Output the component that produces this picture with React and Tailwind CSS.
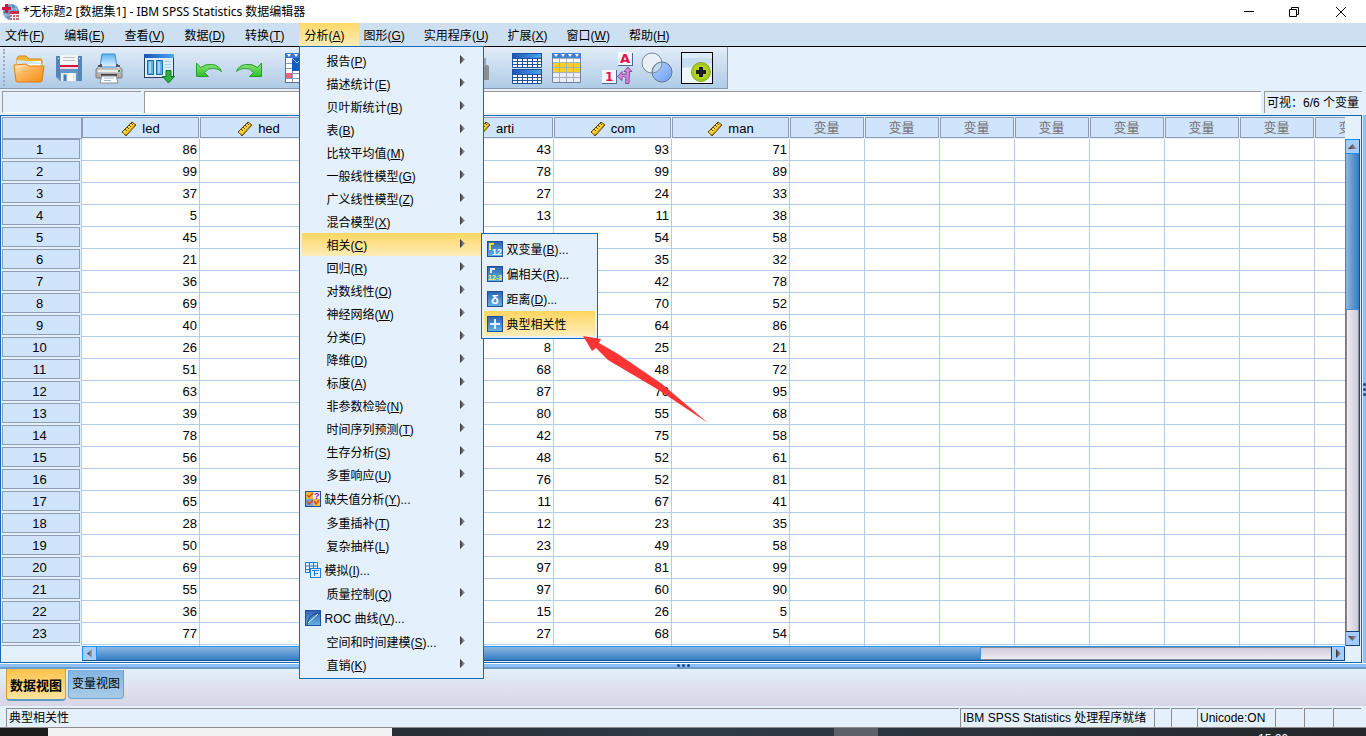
import React from 'react';

const menus = [
  ['文件', 'F'],
  ['编辑', 'E'],
  ['查看', 'V'],
  ['数据', 'D'],
  ['转换', 'T'],
  ['分析', 'A'],
  ['图形', 'G'],
  ['实用程序', 'U'],
  ['扩展', 'X'],
  ['窗口', 'W'],
  ['帮助', 'H'],
];

const analyzeItems = [
  { label: '报告', k: 'P' },
  { label: '描述统计', k: 'E' },
  { label: '贝叶斯统计', k: 'B' },
  { label: '表', k: 'B' },
  { label: '比较平均值', k: 'M' },
  { label: '一般线性模型', k: 'G' },
  { label: '广义线性模型', k: 'Z' },
  { label: '混合模型', k: 'X' },
  { label: '相关', k: 'C', active: true },
  { label: '回归', k: 'R' },
  { label: '对数线性', k: 'O' },
  { label: '神经网络', k: 'W' },
  { label: '分类', k: 'F' },
  { label: '降维', k: 'D' },
  { label: '标度', k: 'A' },
  { label: '非参数检验', k: 'N' },
  { label: '时间序列预测', k: 'T' },
  { label: '生存分析', k: 'S' },
  { label: '多重响应', k: 'U' },
  { label: '缺失值分析', k: 'Y', icon: 'missing', dots: true },
  { label: '多重插补', k: 'T' },
  { label: '复杂抽样', k: 'L' },
  { label: '模拟', k: 'I', icon: 'simulate', dots: true },
  { label: '质量控制', k: 'Q' },
  { label: 'ROC 曲线', k: 'V', icon: 'roc', dots: true },
  { label: '空间和时间建模', k: 'S', dots: true },
  { label: '直销', k: 'K' },
];

const correlateItems = [
  { label: '双变量', k: 'B', icon: 'bivariate', dots: true },
  { label: '偏相关', k: 'R', icon: 'partial', dots: true },
  { label: '距离', k: 'D', icon: 'distance', dots: true },
  { label: '典型相关性', icon: 'plus', active: true },
];

const columns = ['led', 'hed', '', 'arti', 'com', 'man'];

const rows = [
  [86, '', '', 43, 93, 71],
  [99, '', '', 78, 99, 89],
  [37, '', '', 27, 24, 33],
  [5, '', '', 13, 11, 38],
  [45, '', '', 39, 54, 58],
  [21, '', '', '', 35, 32],
  [36, '', '', '', 42, 78],
  [69, '', '', '', 70, 52],
  [40, '', '', '', 64, 86],
  [26, '', '', 8, 25, 21],
  [51, '', '', 68, 48, 72],
  [63, '', '', 87, 76, 95],
  [39, '', '', 80, 55, 68],
  [78, '', '', 42, 75, 58],
  [56, '', '', 48, 52, 61],
  [39, '', '', 76, 52, 81],
  [65, '', '', 11, 67, 41],
  [28, '', '', 12, 23, 35],
  [50, '', '', 23, 49, 58],
  [69, '', '', 97, 81, 99],
  [55, '', '', 97, 60, 90],
  [36, '', '', 15, 26, 5],
  [77, '', '', 27, 68, 54],
  ['', '', '', '', '', ''],
];

const emptyColumns = [0, 1, 2, 3, 4, 5, 6, 7];

/* ---------- icons ---------- */

const Defs = () => (
  <svg width="0" height="0" className="absolute" aria-hidden="true">
    <defs>
      <linearGradient id="gOrange" x1="0" y1="0" x2="1" y2="1">
        <stop offset="0" stopColor="#fff0d8" />
        <stop offset="0.4" stopColor="#fdb65c" />
        <stop offset="1" stopColor="#f58a10" />
      </linearGradient>
      <linearGradient id="gBlue" x1="0" y1="0" x2="1" y2="0">
        <stop offset="0" stopColor="#1c54b4" />
        <stop offset="1" stopColor="#4aa8f0" />
      </linearGradient>
      <linearGradient id="gTile" x1="0" y1="0" x2="0" y2="1">
        <stop offset="0" stopColor="#2f62b4" />
        <stop offset="1" stopColor="#62b4e4" />
      </linearGradient>
      <linearGradient id="gGreen" x1="0" y1="0" x2="0" y2="1">
        <stop offset="0" stopColor="#8fe480" />
        <stop offset="1" stopColor="#2cc028" />
      </linearGradient>
      <linearGradient id="gPaper" x1="0" y1="0" x2="0" y2="1">
        <stop offset="0" stopColor="#5cb0f4" />
        <stop offset="1" stopColor="#e4f4ff" />
      </linearGradient>
      <linearGradient id="gGray" x1="0" y1="0" x2="0" y2="1">
        <stop offset="0" stopColor="#f4f4f4" />
        <stop offset="1" stopColor="#a0a0a0" />
      </linearGradient>
      <linearGradient id="gCircle" x1="0" y1="0" x2="1" y2="1">
        <stop offset="0" stopColor="#b4d4ff" />
        <stop offset="1" stopColor="#6c9cf0" />
      </linearGradient>
      <linearGradient id="gArrow" x1="0" y1="0" x2="1" y2="0">
        <stop offset="0" stopColor="#333333" />
        <stop offset="1" stopColor="#a8a8a8" />
      </linearGradient>
    </defs>
  </svg>
);

const AppIcon = () => (
  <svg width="18" height="18" viewBox="0 0 18 18">
    <circle cx="9" cy="9" r="8" fill="#5c94c0" />
    <path d="M9 1v16M2 6h14M2 12h14M5 2c-2 4-2 10 0 14M13 2c2 4 2 10 0 14" fill="none" stroke="#a8c8e0" />
    <path d="M3 1h3v3h3v3H6v3H3V7H0V4h3z" fill="#d8103c" />
    <rect x="8" y="8" width="9" height="10" fill="#fff" />
    <rect x="8" y="8" width="9" height="3" fill="#c8304c" />
    <path d="M8 12h2v2H8zM11 12h2v2h-2zM14 12h3v2h-3zM8 15h2v2H8zM11 15h2v2h-2zM14 15h3v2h-3z" fill="#c86878" />
  </svg>
);

const OpenIcon = () => (
  <svg width="32" height="32" viewBox="0 0 32 32">
    <path d="M4 12V6l2-2h7l3 3h12l1 2v8H4z" fill="#f5b638" stroke="#d08a14" />
    <path d="M5 9h23v8H5z" fill="#fff" />
    <path d="M4 8l22 2 3 2v5H4z" fill="#cfe4f8" />
    <path d="M3 12h24v3H3z" fill="#fff" />
    <path d="M3 29L1 13l12-1 3 2h15l-2 15q-1 1-2 1H5q-2 0-2-1z" fill="url(#gOrange)" stroke="#e07c10" />
  </svg>
);

const SaveIcon = () => (
  <svg width="32" height="32" viewBox="0 0 32 32">
    <path d="M3 4h26v25H7l-4-4z" fill="#6494c8" />
    <path d="M3 4h4v22l-4-1zM25 4h4v25h-4z" fill="#5484b8" />
    <path d="M5 6h1v1H5zM26 6h1v1h-1z" fill="#dce8f4" />
    <path d="M7 3h18v11H7z" fill="#f2f5f8" />
    <path d="M7 13h18v2H7z" fill="#d4143c" />
    <path d="M7 15h18v2H7z" fill="#f8d8e0" />
    <path d="M10 5.5h12M10 8.5h12" stroke="#b8c0c8" />
    <path d="M8 21h15v8H8z" fill="#e6eaee" />
    <path d="M10.5 22.500h3v6.500h-3z" fill="#4878b0" />
    <path d="M15 21h5v8h-5z" fill="#fff" />
  </svg>
);

const PrintIcon = () => (
  <svg width="32" height="32" viewBox="0 0 32 32">
    <path d="M3 17l5-4h16l5 4v8q0 1-1 1H4q-1 0-1-1z" fill="url(#gGray)" stroke="#7c7c7c" />
    <path d="M7 15L9 2h13l2 13z" fill="url(#gPaper)" stroke="#3c8cd4" />
    <path d="M5 14h3v-2M24 12v2h3" fill="none" stroke="#555" strokeWidth="2" />
    <path d="M4 17h24v4H4z" fill="#ececec" stroke="#9c9c9c" />
    <path d="M8 22h16v2H8z" fill="#444" />
    <path d="M9 24h14l2 7H7z" fill="#fff" stroke="#8f8f8f" />
    <path d="M11 26h10M11 28.500h7" stroke="#9ab8d4" />
    <path d="M25 19h2" stroke="#28a028" strokeWidth="2" />
  </svg>
);

const RecallIcon = () => (
  <svg width="32" height="32" viewBox="0 0 32 32">
    <rect x="1.5" y="2.5" width="29" height="23" fill="#dcecfa" stroke="#2c3c5c" />
    <rect x="1" y="2" width="30" height="4" fill="url(#gBlue)" />
    <path d="M4.500 8.500h6v14h-6zM13.500 8.500h6v14h-6z" fill="#62b0e0" stroke="#186cac" />
    <path d="M6 10h2v11H6zM15 10h2v11h-2z" fill="#a4d8f4" />
    <path d="M22 9.500h6M22 12.500h6M22 15.500h6" stroke="#a8d0ec" />
    <path d="M23 18.500h5v6h3.500L25.500 31l-6-6.500H23z" fill="#2cb040" stroke="#107424" />
  </svg>
);

const UndoIcon = ({ flip }) => (
  <svg width="32" height="32" viewBox="0 0 32 32">
    <path
      transform={flip ? 'translate(32 0) scale(-1 1)' : undefined}
      d="M3.500 11v13.500h12l-4-4q4-5 9-4 5 0 8 3-2-6-9-7-7-1-12 3z"
      fill="url(#gGreen)"
      stroke="#2c9c30"
    />
  </svg>
);

const GotoIcon = () => (
  <svg width="32" height="32" viewBox="0 0 32 32">
    <rect x="0.5" y="1.5" width="30" height="29" fill="#fff" stroke="#60708c" />
    <rect x="0" y="1" width="31" height="5" fill="#3c78d0" />
    <path d="M2 2h4l-2 3zM9 2h4l-2 3z" fill="#fff" />
    <path d="M7.500 6v24M14.500 6v24M1 11.500h30M1 16.500h30M1 21.500h30M1 26.500h30" stroke="#8898b4" />
    <rect x="1" y="21" width="6" height="5" fill="#f06070" />
    <path d="M7 6h24v13H7z" fill="#145cc0" />
    <path d="M7 6l5 5 4-4" fill="none" stroke="#8cc4f4" />
  </svg>
);

const BinocularIcon = () => (
  <svg width="32" height="32" viewBox="0 0 32 32">
    <path d="M4 12h8V6h8v6h8l4 2v14H4z" fill="#8a8f94" />
    <path d="M26 6h3v8h-3z" fill="#a0a4a8" />
  </svg>
);

const SplitIcon = () => (
  <svg width="32" height="32" viewBox="0 0 32 32">
    {[1, 17].map((y) => (
      <g key={y} transform={`translate(0 ${y})`}>
        <rect x="1" y="0" width="30" height="15" fill="#fff" />
        <rect x="1" y="0" width="30" height="5" fill="url(#gBlue)" />
        <path
          d="M1.500 0v14.500h29V0M1 .5h30M1 5.500h30M1 8.500h30M1 11.500h30M6.500 5v10M11.500 5v10M16.500 5v10M21.500 5v10M26.500 5v10"
          fill="none"
          stroke="#1c50a4"
        />
      </g>
    ))}
  </svg>
);

const SelectCasesIcon = () => (
  <svg width="32" height="32" viewBox="0 0 32 32">
    <rect x="1" y="1" width="29" height="30" fill="#fff" />
    <rect x="1" y="1" width="29" height="5" fill="#4080d8" />
    <path d="M3 2h4l-2 3zM10 2h4l-2 3zM17 2h4l-2 3zM24 2h4l-2 3z" fill="#fff" />
    <rect x="1" y="11" width="29" height="10" fill="#f8d028" />
    <rect x="1" y="21" width="29" height="9" fill="#e8edf2" />
    <path d="M1 6.500h29M1 10.500h29M1 15.500h29M1 20.500h29M1 25.500h29M8.500 6v24M15.500 6v24M22.500 6v24" stroke="#a8b0bc" />
    <path d="M1.500 6v24.500h28V6" fill="none" stroke="#7080a0" />
  </svg>
);

const LabelsIcon = () => (
  <svg width="32" height="32" viewBox="0 0 32 32">
    <rect x="17" y="0" width="15" height="13" fill="#f4f8fc" />
    <path d="M17 13.500h15.500M31.500 1v13" fill="none" stroke="#4c6890" />
    <text x="19" y="11" fontSize="13" fontWeight="700" fill="#e8104c" fontFamily="DejaVu Sans">A</text>
    <rect x="1" y="18" width="14" height="13" fill="#f4f8fc" />
    <path d="M1 31.500h14.500V18" fill="none" stroke="#4c6890" />
    <text x="4" y="29" fontSize="12" fontWeight="700" fill="#e8104c" fontFamily="DejaVu Sans">1</text>
    <path d="M28 31.500h-3.500l.5-6q-3-2-4 0v3l-4.500-4 4.500-5v3q3-1 4 0v-3h-2l4-4.500 4 4.500h-2.500z" fill="#d088d8" stroke="#8c4c9c" />
  </svg>
);

const SetsIcon = () => (
  <svg width="32" height="32" viewBox="0 0 32 32">
    <circle cx="11" cy="11" r="10" fill="#e8f0f8" stroke="#7c8894" />
    <circle cx="21" cy="20" r="10" fill="url(#gCircle)" stroke="#64748c" />
    <path d="M11.500 21A10 10 0 0 1 21 10 10 10 0 0 1 11.500 21z" fill="#c4d8f0" stroke="#7c8894" />
  </svg>
);

const CustomIcon = () => (
  <svg width="32" height="32" viewBox="0 0 32 32">
    <rect x="0.5" y="0.5" width="31" height="31" fill="#dcebfa" stroke="#000" />
    <path d="M1 6h30v5L1 16z" fill="#c8dcf2" />
    <path d="M1 16h30v15H1z" fill="#eef6fe" />
    <circle cx="20" cy="20" r="9.500" fill="#b4d420" stroke="#80a818" />
    <circle cx="20" cy="20" r="8" fill="none" stroke="#98c018" />
    <path d="M20 15v10M15 20h10" stroke="#1c1c1c" strokeWidth="4" />
  </svg>
);

const RulerIcon = () => (
  <svg width="16" height="16" viewBox="0 0 16 16">
    <path d="M1 11L11 1l4 3L5 15z" fill="#fcd030" stroke="#54461c" />
    <path d="M4 8l2 2M6 6l2 2M8 4l2 2M10 2l2 2" stroke="#5c4808" />
    <path d="M2 12l3 2 9-10" fill="none" stroke="#b87c10" />
  </svg>
);

const ItemIcon = ({ name }) => {
  if (name === 'simulate') {
    return (
      <svg width="16" height="16" viewBox="0 0 16 16">
        <path d="M.5.5h12v10H.5zM.5 4h12M.5 7.500h12M4.500.5v10M8.500.5v10" fill="#e4f0fc" stroke="#1c7cdc" />
        <rect x="5.500" y="6.500" width="10" height="9" fill="#e4f0fc" stroke="#1c7cdc" />
        <path d="M7 8.500h7M9.500 8v6M9 11.500h4" fill="none" stroke="#1c7cdc" />
      </svg>
    );
  }
  return (
    <svg width="16" height="16" viewBox="0 0 16 16">
      <rect x="0.5" y="0.5" width="15" height="15" fill="url(#gTile)" stroke="#1f4f98" />
      {name === 'missing' && (
        <>
          <path d="M1 1h7v7H1z" fill="#f0b840" />
          <path d="M8 1h7v7H8z" fill="#f4e8f4" />
          <path d="M1 8h7v7H1z" fill="#6ca8dc" />
          <path d="M8 8h7v7H8z" fill="#e8c048" />
          <path d="M2 4l2 2 4-4M2 10l2 3 4-4M9 10l2 3 3-4" fill="none" stroke="#e04430" strokeWidth="1.500" />
          <text x="9" y="8" fontSize="9" fontWeight="700" fill="#8c209c" fontFamily="Liberation Sans">?</text>
        </>
      )}
      {name === 'roc' && (
        <>
          <path d="M2 15C3 7 8 3 15 3" fill="none" stroke="#1c3c78" />
          <path d="M3 13L13 4" stroke="#e4f4fc" />
        </>
      )}
      {name === 'bivariate' && (
        <>
          <path d="M3 9V2M3 4q1-2 4-1" fill="none" stroke="#fce820" strokeWidth="2" />
          <text x="5" y="14" fontSize="9" fontWeight="700" fill="#fff" fontFamily="Liberation Sans">12</text>
        </>
      )}
      {name === 'partial' && (
        <>
          <path d="M4 7V2M4 3h4" fill="none" stroke="#e8e8e8" strokeWidth="2" />
          <text x="1" y="14" fontSize="7" fontWeight="700" fill="#f0f060" fontFamily="Liberation Sans">12-3</text>
        </>
      )}
      {name === 'distance' && (
        <text x="4" y="13" fontSize="13" fontWeight="700" fill="#fff" fontFamily="Liberation Sans">δ</text>
      )}
      {name === 'plus' && <path d="M8 3v10M3 8h10" stroke="#e4f4fc" strokeWidth="2" />}
    </svg>
  );
};

const Triangle = ({ d }) => (
  <svg width="9" height="9" viewBox="0 0 9 9">
    <path d={d} fill="url(#gArrow)" />
  </svg>
);

const Label = ({ label, k, dots }) => (
  <span className="whitespace-nowrap">
    {label}
    {k && (
      <>
        (<span className="underline underline-offset-1">{k}</span>)
      </>
    )}
    {dots && '...'}
  </span>
);

/* ---------- menus ---------- */

const MenuItem = ({ item, submenu }) => {
  const height = item.icon ? 'h-[25px]' : 'h-[23px] pt-0.5';
  const indent = submenu || item.icon ? 'pl-[3px] gap-[3px]' : 'pl-6';
  const bg = item.active ? 'bg-linear-to-b from-[#ffd65c] to-[#fcecb8]' : '';
  return (
    <button className={`flex w-full items-center text-left ${height} ${indent} ${bg}`}>
      {item.icon && <ItemIcon name={item.icon} />}
      <span className={item.icon ? 'pt-0.5' : ''}>
        <Label {...item} />
      </span>
      {!item.icon && (
        <span className="ml-auto mr-4 pb-1">
          <Triangle d="M2 0L7 4.5 2 9z" />
        </span>
      )}
    </button>
  );
};

const AnalyzeMenu = () => (
  <div className="absolute left-0 top-full z-20 w-[185px] border border-[#1468b4] bg-[#e4f0fc] py-0.5 pl-0.5">
    {analyzeItems.map((item) => (
      <div key={item.label} className="relative">
        <MenuItem item={item} />
        {item.active && (
          <div className="absolute left-[179px] top-0 z-30 w-[117px] border border-[#1468b4] bg-[#e4f0fc] py-0.5 pl-0.5 pr-0.5">
            {correlateItems.map((sub) => (
              <MenuItem key={sub.label} item={sub} submenu />
            ))}
          </div>
        )}
      </div>
    ))}
  </div>
);

const MenuBar = () => (
  <nav className="flex h-6 border-b border-black bg-[#cde0f1]">
    {menus.map(([label, k], i) => (
      <div key={label} className="relative h-[23px]">
        <button
          className={`h-full pl-[5px] pt-0.5 ${i < 5 ? 'pr-[15px]' : 'pr-3.5'} ${
            k === 'A' ? 'bg-linear-to-b from-[#ffd965] to-[#fcebb5]' : ''
          }`}
        >
          <Label label={label} k={k} />
        </button>
        {k === 'A' && <AnalyzeMenu />}
      </div>
    ))}
  </nav>
);

const ToolButton = ({ name, children }) => (
  <button aria-label={name} className="flex w-10 items-center justify-center">
    {children}
  </button>
);

const Toolbar = () => (
  <div className="flex h-[42px] bg-[#e4f0fc]">
    <div className="flex border-b border-r border-[#8e98a6] bg-linear-to-b from-[#e2edf8] to-[#afcbe6] pl-[3px] pr-2.5">
      <div className="my-0.5 mr-1 w-0.5 border-l-2 border-dotted border-[#9cacbe]" />
      <ToolButton name="打开"><OpenIcon /></ToolButton>
      <ToolButton name="保存"><SaveIcon /></ToolButton>
      <ToolButton name="打印"><PrintIcon /></ToolButton>
      <div className="w-2.5" />
      <ToolButton name="重新调用"><RecallIcon /></ToolButton>
      <div className="w-2.5" />
      <ToolButton name="撤销"><UndoIcon /></ToolButton>
      <ToolButton name="重做"><UndoIcon flip /></ToolButton>
      <div className="w-3" />
      <ToolButton name="转到个案"><GotoIcon /></ToolButton>
      <ToolButton name="转到变量"><GotoIcon /></ToolButton>
      <ToolButton name="变量"><RecallIcon /></ToolButton>
      <div className="w-3" />
      <ToolButton name="描述"><SelectCasesIcon /></ToolButton>
      <ToolButton name="查找"><BinocularIcon /></ToolButton>
      <div className="w-3.5" />
      <ToolButton name="拆分文件"><SplitIcon /></ToolButton>
      <ToolButton name="选择个案"><SelectCasesIcon /></ToolButton>
      <div className="w-2.5" />
      <ToolButton name="值标签"><LabelsIcon /></ToolButton>
      <ToolButton name="使用变量集"><SetsIcon /></ToolButton>
      <ToolButton name="定制工具栏"><CustomIcon /></ToolButton>
    </div>
  </div>
);

/* ---------- data grid ---------- */

const DataTable = () => (
  <table className="w-[1389px] table-fixed border-separate border-spacing-0 text-[13px] leading-5">
    <colgroup>
      <col className="w-[81px]" />
      {columns.map((c, i) => <col key={i} className="w-[118px]" />)}
      {emptyColumns.map((c) => <col key={c} className="w-[75px]" />)}
    </colgroup>
    <thead>
      <tr className="h-[23px]">
        <th className="p-0 pt-px" aria-label="个案">
          <div className="ml-px h-[22px] border border-[#8e9cb8] bg-[#d0e4fc]" />
        </th>
        {columns.map((c, i) => (
          <th key={i} className="p-0 pr-px font-normal">
            <div className="flex h-[21px] items-center justify-center gap-[5px] border border-[#8e9cb8] bg-[#d0e4fc] pt-0.5">
              <RulerIcon />
              {c}
            </div>
          </th>
        ))}
        {emptyColumns.map((c) => (
          <th key={c} className="p-0 pr-px font-normal">
            <div className="flex h-[21px] items-center justify-center border border-[#8e9cb8] bg-[#d0e4fc] pr-px pt-px text-[#707070]">
              变量
            </div>
          </th>
        ))}
      </tr>
    </thead>
    <tbody>
      {rows.map((row, r) => (
        <tr key={r} className="h-[22px]">
          <th className="border-r border-[#b0cdeb] bg-[#e4f0fc] p-0 pb-0.5 pl-px pr-px font-normal">
            <div className="h-5 border border-[#8e9cb8] bg-[#d0e4fc] pr-[3px] leading-5">{r < 23 ? r + 1 : ''}</div>
          </th>
          {row.map((v, i) => (
            <td key={i} className="border-b border-r border-[#b0cdeb] bg-white p-0 pr-0.5 text-right">{v}</td>
          ))}
          {emptyColumns.map((c) => (
            <td key={c} className="border-b border-r border-[#b0cdeb] bg-white p-0" />
          ))}
        </tr>
      ))}
    </tbody>
  </table>
);

const VerticalScroll = () => (
  <div className="mt-[23px] flex w-[15px] flex-col border-l border-r border-l-[#1c90f0] border-r-[#14508c] bg-linear-to-r from-[#f0eef4] to-[#ccc8d8]">
    <button aria-label="向上滚动" className="flex h-[15px] items-center justify-center border-y border-[#1c90f0] bg-[#a4ccfc]">
      <Triangle d="M4.5 2L9 7H0z" />
    </button>
    <div className="h-[156px] border-b border-[#3c90dc] bg-linear-to-r from-[#8cb8e0] to-[#2f7cc4]" />
    <div className="flex-1 border-x border-[#8c8c94]" />
    <button aria-label="向下滚动" className="flex h-[15px] items-center justify-center border-y border-[#14407c] bg-[#a4ccfc]">
      <Triangle d="M0 2h9L4.5 7z" />
    </button>
  </div>
);

const HorizontalScroll = () => (
  <div className="ml-[81px] mr-[15px] flex h-[15px] border-b border-t border-b-[#14508c] border-t-[#1c90f0] bg-linear-to-b from-[#ccc8d8] to-[#f0eef4]">
    <button aria-label="向左滚动" className="flex w-[15px] items-center justify-center border-x border-[#1c90f0] bg-[#a4ccfc]">
      <Triangle d="M7 0v9L2 4.5z" />
    </button>
    <div className="w-[70%] border-r border-[#3c90dc] bg-linear-to-b from-[#8cb8e0] to-[#2f7cc4]" />
    <div className="flex-1 border-y border-[#8c8c94]" />
    <button aria-label="向右滚动" className="flex w-3.5 items-center justify-center border-x border-[#14407c] bg-[#a4ccfc]">
      <Triangle d="M2 0l5 4.5L2 9z" />
    </button>
  </div>
);

const Grip = ({ vertical }) => (
  <div className={`flex gap-0.5 ${vertical ? 'flex-col' : ''}`}>
    {[0, 1, 2].map((i) => (
      <span key={i} className="h-[3px] w-[3px] rounded-full bg-[#1c4888]" />
    ))}
  </div>
);

const cell = 'border-l border-t border-[#8c8c8c] pl-0.5';

export default function App() {
  return (
    <div className="flex h-screen flex-col overflow-hidden bg-[#e4f0fc] font-['Liberation_Sans','Noto_Sans_CJK_SC',sans-serif] text-[12px] leading-4 text-black">
      <Defs />
      <header className="flex h-[23px] items-center bg-white pl-0.5">
        <AppIcon />
        <h1 className="ml-[3px] font-['Noto_Sans','Noto_Sans_CJK_SC',sans-serif]">
          *无标题2 [数据集1] - IBM SPSS Statistics 数据编辑器
        </h1>
        <div className="ml-auto mr-[19px] flex gap-[34px]">
          <button aria-label="最小化">
            <svg width="12" height="12" viewBox="0 0 12 12"><path d="M1 5.500h10" stroke="#000" /></svg>
          </button>
          <button aria-label="还原">
            <svg width="12" height="12" viewBox="0 0 12 12"><path d="M.5 3.500h7v7h-7zM2.500 3.500v-2h7v7h-2" fill="none" stroke="#000" /></svg>
          </button>
          <button aria-label="关闭">
            <svg width="12" height="12" viewBox="0 0 12 12"><path d="M1 1l10 10M11 1L1 11" stroke="#000" /></svg>
          </button>
        </div>
      </header>

      <MenuBar />
      <Toolbar />

      <div className="flex h-[26px] gap-[3px] pb-0.5 pl-0.5 pr-1 pt-0.5">
        <input readOnly aria-label="单元格" className="w-[139px] border-l border-t border-[#9a9a9a] border-b border-b-white bg-[#e4f0fc]" />
        <input readOnly aria-label="值" className="min-w-0 flex-1 border-l border-t border-[#9a9a9a] bg-white" />
        <div className="w-[98px] whitespace-nowrap border-l border-t border-[#9a9a9a] pl-0.5 pt-[3px]">可视：6/6 个变量</div>
      </div>

      <main className="flex min-h-0 flex-1">
        <section className="flex min-w-0 flex-1 flex-col border border-[#1468b4] pb-px pr-px">
          <div className="flex min-h-0 flex-1">
            <div className="min-w-0 flex-1 overflow-hidden">
              <DataTable />
            </div>
            <VerticalScroll />
          </div>
          <HorizontalScroll />
        </section>
        <div className="flex w-1 items-center justify-center border-l border-[#d4f0fc] bg-[#8cc0f8]">
          <Grip vertical />
        </div>
      </main>

      <div className="flex h-1.5 items-center justify-center border-b-2 border-t border-b-[#6c9ccc] border-t-white bg-[#8cc0f8]">
        <Grip />
      </div>

      <div className="flex h-[37px] items-start gap-0.5 bg-linear-to-b from-[#e4f0fc] to-[#d8d4e4] pl-1.5">
        <button className="h-8 w-[60px] rounded-b border border-t-0 border-b-2 border-[#d89c28] border-b-[#5c98cc] bg-linear-to-b from-[#ffc34a] to-[#ffe49c] pt-1 whitespace-nowrap text-[13px] font-bold">
          数据视图
        </button>
        <button className="mt-px h-[29px] w-14 rounded-b border border-t-0 border-[#6ca0d0] bg-linear-to-b from-[#84b4e0] to-[#a8cce8] whitespace-nowrap">
          变量视图
        </button>
      </div>

      <footer className="flex h-[22px] gap-px border-b border-[#8c8c8c] bg-[#e4f0fc] pl-1.5 pr-[5px] pt-0.5 leading-[18px]">
        <div className={`min-w-0 flex-1 ${cell}`}>典型相关性</div>
        <div className={`w-[193px] whitespace-nowrap ${cell}`}>IBM SPSS Statistics 处理程序就绪</div>
        <div className={`w-4 ${cell}`} />
        <div className={`w-[25px] ${cell}`} />
        <div className={`w-[77px] ${cell}`}>Unicode:ON</div>
        <div className={`w-7 ${cell}`} />
        <div className={`w-7 ${cell}`} />
        <div className={`w-7 ${cell}`} />
      </footer>

      <div className="flex h-2 overflow-hidden bg-linear-to-r from-[#1c1c1c] via-[#2f3b47] to-[#23272b]">
        <div className="w-12 bg-[#1c1c1c]" />
        <div className="w-[344px] bg-[#f2f2f2]" />
        <div className="ml-[442px] w-11 bg-[#5c6268]" />
        <div className="ml-auto mr-[78px] pt-[3px] text-[12px] leading-4 text-white">15:26</div>
      </div>

      <svg className="pointer-events-none absolute left-[582px] top-[335px] z-40" width="128" height="90" viewBox="0 0 128 90">
        <path d="M1 1L19 4 17 8 36 19 80 49 126 88 75 54 26 25 14 13 10 16z" fill="#fc3434" />
      </svg>
    </div>
  );
}
